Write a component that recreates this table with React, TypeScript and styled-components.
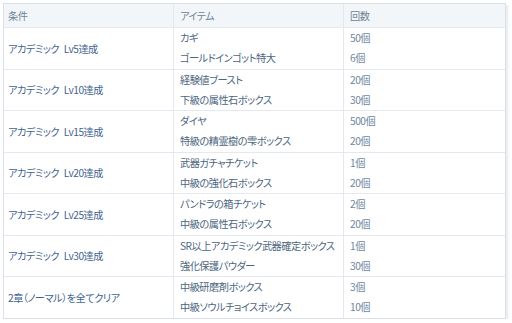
import React from 'react';
import styled, { createGlobalStyle } from 'styled-components';

const GlobalStyle = createGlobalStyle`
  html, body {
    margin: 0;
    padding: 0;
    background: #ffffff;
  }
`;

interface RewardItem {
  name: string;
  count: string;
}

interface RewardRow {
  condition: string;
  items: RewardItem[];
}

const rows: RewardRow[] = [
  { condition: 'アカデミック Lv5達成', items: [{ name: 'カギ', count: '50個' }, { name: 'ゴールドインゴット特大', count: '6個' }] },
  { condition: 'アカデミック Lv10達成', items: [{ name: '経験値ブースト', count: '20個' }, { name: '下級の属性石ボックス', count: '30個' }] },
  { condition: 'アカデミック Lv15達成', items: [{ name: 'ダイヤ', count: '500個' }, { name: '特級の精霊樹の雫ボックス', count: '20個' }] },
  { condition: 'アカデミック Lv20達成', items: [{ name: '武器ガチャチケット', count: '1個' }, { name: '中級の強化石ボックス', count: '20個' }] },
  { condition: 'アカデミック Lv25達成', items: [{ name: 'パンドラの箱チケット', count: '2個' }, { name: '中級の属性石ボックス', count: '20個' }] },
  { condition: 'アカデミック Lv30達成', items: [{ name: 'SR以上アカデミック武器確定ボックス', count: '1個' }, { name: '強化保護パウダー', count: '30個' }] },
  { condition: '2章（ノーマル）を全てクリア', items: [{ name: '中級研磨剤ボックス', count: '3個' }, { name: '中級ソウルチョイスボックス', count: '10個' }] },
];

const Page = styled.div`
  padding: 3px 0 0 3px;
  font-family: 'Noto Sans CJK JP', 'Noto Sans', sans-serif;
  font-size: 10.2px;
  letter-spacing: -0.5px;
  word-spacing: 3px;
  font-feature-settings: 'palt';
`;

const Table = styled.div`
  width: 503px;
  border: 1px solid #d9e0e8;
  box-sizing: border-box;
  box-shadow: 2px 2px 2px rgba(120, 140, 160, 0.18);
  background: #ffffff;
`;

const Row = styled.div<{ $header?: boolean }>`
  display: grid;
  grid-template-columns: 169px 170px 1fr;
  height: ${({ $header }) => ($header ? '23px' : '41.5px')};
  background: ${({ $header }) => ($header ? '#f3f6f9' : '#ffffff')};
  border-top: ${({ $header }) => ($header ? 'none' : '1px solid #e4e9ef')};
  box-sizing: border-box;
`;

const Cell = styled.div<{ $tone: 'head' | 'cond' | 'item' | 'count'; $first?: boolean }>`
  display: flex;
  flex-direction: column;
  justify-content: center;
  padding-left: ${({ $first }) => ($first ? '4px' : '6px')};
  border-left: ${({ $first }) => ($first ? 'none' : '1px solid #e4e9ef')};
  color: ${({ $tone }) =>
    $tone === 'head' ? '#6f8399' : $tone === 'cond' ? '#3f6490' : $tone === 'item' ? '#4d6680' : '#6f86a2'};
  white-space: nowrap;
`;

const Line = styled.div`
  height: 20px;
  line-height: 20px;
`;

export default function App() {
  return (
    <Page>
      <GlobalStyle />
      <Table>
        <Row $header>
          <Cell $tone="head" $first>条件</Cell>
          <Cell $tone="head">アイテム</Cell>
          <Cell $tone="head">回数</Cell>
        </Row>
        {rows.map((row) => (
          <Row key={row.condition}>
            <Cell $tone="cond" $first>{row.condition}</Cell>
            <Cell $tone="item">
              {row.items.map((it) => (
                <Line key={it.name}>{it.name}</Line>
              ))}
            </Cell>
            <Cell $tone="count">
              {row.items.map((it) => (
                <Line key={it.name}>{it.count}</Line>
              ))}
            </Cell>
          </Row>
        ))}
      </Table>
    </Page>
  );
}
